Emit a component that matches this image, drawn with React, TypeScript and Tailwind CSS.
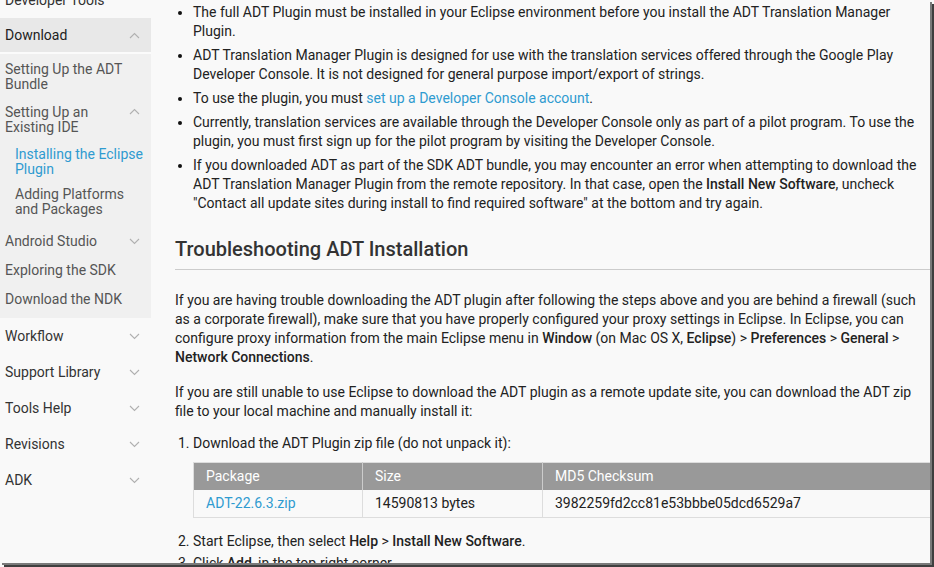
import type { ReactNode } from "react";

function Caret({ up }: { up?: boolean }) {
  return (
    <svg width="11" height="7" viewBox="0 0 11 7" className="shrink-0">
      <polyline
        points={up ? "1,6 5.5,1.5 10,6" : "1,1 5.5,5.5 10,1"}
        fill="none"
        stroke="#b0b0b0"
        strokeWidth="1.1"
      />
    </svg>
  );
}

function NavTop({ label, up }: { label: string; up?: boolean }) {
  return (
    <div className="flex h-9 items-center justify-between pl-[5px] pr-[11px] text-[14px] text-[#333]">
      <span>{label}</span>
      <Caret up={up} />
    </div>
  );
}

function Sidebar() {
  return (
    <aside className="w-[151px] shrink-0 text-[14px]">
      <div className="-mt-[18px] flex h-9 items-center pl-[5px] text-[#333]">Developer Tools</div>
      <div className="flex h-[34px] items-center justify-between bg-[#e8e8e8] pl-[5px] pr-[11px] text-[#222]">
        <span>Download</span>
        <Caret up />
      </div>
      <div className="h-[2px] bg-[#fbfbfb]" />
      <div className="bg-[#f0f0f0] leading-[15px] text-[#555]">
        <div className="pb-[7px] pl-[5px] pr-2 pt-[8px]">Setting Up the ADT Bundle</div>
        <div className="flex justify-between pb-[6px] pl-[5px] pr-[11px] pt-[6px]">
          <span className="w-[100px]">Setting Up an Existing IDE</span>
          <span className="pt-[3px]">
            <Caret up />
          </span>
        </div>
        <div className="pb-[5px] pl-[15px] pr-1 pt-[6px] text-[#2f9bd0]">Installing the Eclipse Plugin</div>
        <div className="pb-[8px] pl-[15px] pr-2 pt-[5px]">Adding Platforms and Packages</div>
        <div className="flex items-center justify-between pb-[7px] pl-[5px] pr-[11px] pt-[9px]">
          <span>Android Studio</span>
          <Caret />
        </div>
        <div className="pb-[7px] pl-[5px] pt-[7px]">Exploring the SDK</div>
        <div className="pb-[11px] pl-[5px] pt-[7px]">Download the NDK</div>
      </div>
      <NavTop label="Workflow" />
      <NavTop label="Support Library" />
      <NavTop label="Tools Help" />
      <NavTop label="Revisions" />
      <NavTop label="ADK" />
    </aside>
  );
}

function B({ children }: { children: ReactNode }) {
  return <span className="font-medium text-[#222]">{children}</span>;
}

function Bullet({ children }: { children: ReactNode }) {
  return <li className="mb-[5px] pl-0">{children}</li>;
}

export default function App() {
  return (
    <div
      className="h-[567px] w-[934px] overflow-hidden bg-[#f9f9f9]"
      style={{ fontFamily: "Roboto, 'Liberation Sans', sans-serif" }}
    >
      <div className="flex h-[563px] w-[930px] overflow-hidden bg-[#f9f9f9] shadow-[2px_2px_0_#7a7a7a,4px_4px_0_#3f3f3f]">
        <Sidebar />
        <main className="ml-[24px] w-[755px] shrink-0 text-[14px] leading-[19px] text-[#222]">
          <ul className="mt-[3px] list-disc pl-[18px] marker:text-[#111]">
            <Bullet>
              The full ADT Plugin must be installed in your Eclipse environment before you install the ADT Translation Manager Plugin.
            </Bullet>
            <Bullet>
              ADT Translation Manager Plugin is designed for use with the translation services offered through the Google Play Developer Console. It is not designed for general purpose import/export of strings.
            </Bullet>
            <Bullet>
              To use the plugin, you must <span className="text-[#2f9bd0]">set up a Developer Console account</span>.
            </Bullet>
            <Bullet>
              Currently, translation services are available through the Developer Console only as part of a pilot program. To use the plugin, you must first sign up for the pilot program by visiting the Developer Console.
            </Bullet>
            <Bullet>
              If you downloaded ADT as part of the SDK ADT bundle, you may encounter an error when attempting to download the ADT Translation Manager Plugin from the remote repository. In that case, open the <B>Install New Software</B>, uncheck "Contact all update sites during install to find required software" at the bottom and try again.
            </Bullet>
          </ul>
          <h2 className="mt-[24px] border-b border-[#ccc] pb-[8px] text-[20px] font-medium leading-[24px] text-[#333]">
            Troubleshooting ADT Installation
          </h2>
          <p className="mt-[21px] pr-[2px]">
            If you are having trouble downloading the ADT plugin after following the steps above and you are behind a firewall (such as a corporate firewall), make sure that you have properly configured your proxy settings in Eclipse. In Eclipse, you can configure proxy information from the main Eclipse menu in <B>Window</B> (on Mac OS X, <B>Eclipse</B>) &gt; <B>Preferences</B> &gt; <B>General</B> &gt; <B>Network Connections</B>.
          </p>
          <p className="mt-[16px]">
            If you are still unable to use Eclipse to download the ADT plugin as a remote update site, you can download the ADT zip file to your local machine and manually install it:
          </p>
          <ol className="mt-[13px] list-decimal pl-[18px]">
            <li>
              Download the ADT Plugin zip file (do not unpack it):
              <table className="mb-[14px] mt-[9px] w-[760px] border-collapse border border-[#ddd] text-left">
                <thead>
                  <tr className="h-[27px] bg-[#999] text-white">
                    <th className="w-[169px] border-r border-[#ccc] pl-[12px] font-normal">Package</th>
                    <th className="w-[180px] border-r border-[#ccc] pl-[12px] font-normal">Size</th>
                    <th className="pl-[12px] font-normal">MD5 Checksum</th>
                  </tr>
                </thead>
                <tbody>
                  <tr className="h-[28px] border-b border-[#ddd]">
                    <td className="border-r border-[#ddd] pl-[12px] text-[#2f9bd0]">ADT-22.6.3.zip</td>
                    <td className="border-r border-[#ddd] pl-[12px]">14590813 bytes</td>
                    <td className="pl-[12px]">3982259fd2cc81e53bbbe05dcd6529a7</td>
                  </tr>
                </tbody>
              </table>
            </li>
            <li className="mb-[3px]">
              Start Eclipse, then select <B>Help</B> &gt; <B>Install New Software</B>.
            </li>
            <li>
              Click <B>Add</B>, in the top-right corner.
            </li>
          </ol>
        </main>
      </div>
    </div>
  );
}
